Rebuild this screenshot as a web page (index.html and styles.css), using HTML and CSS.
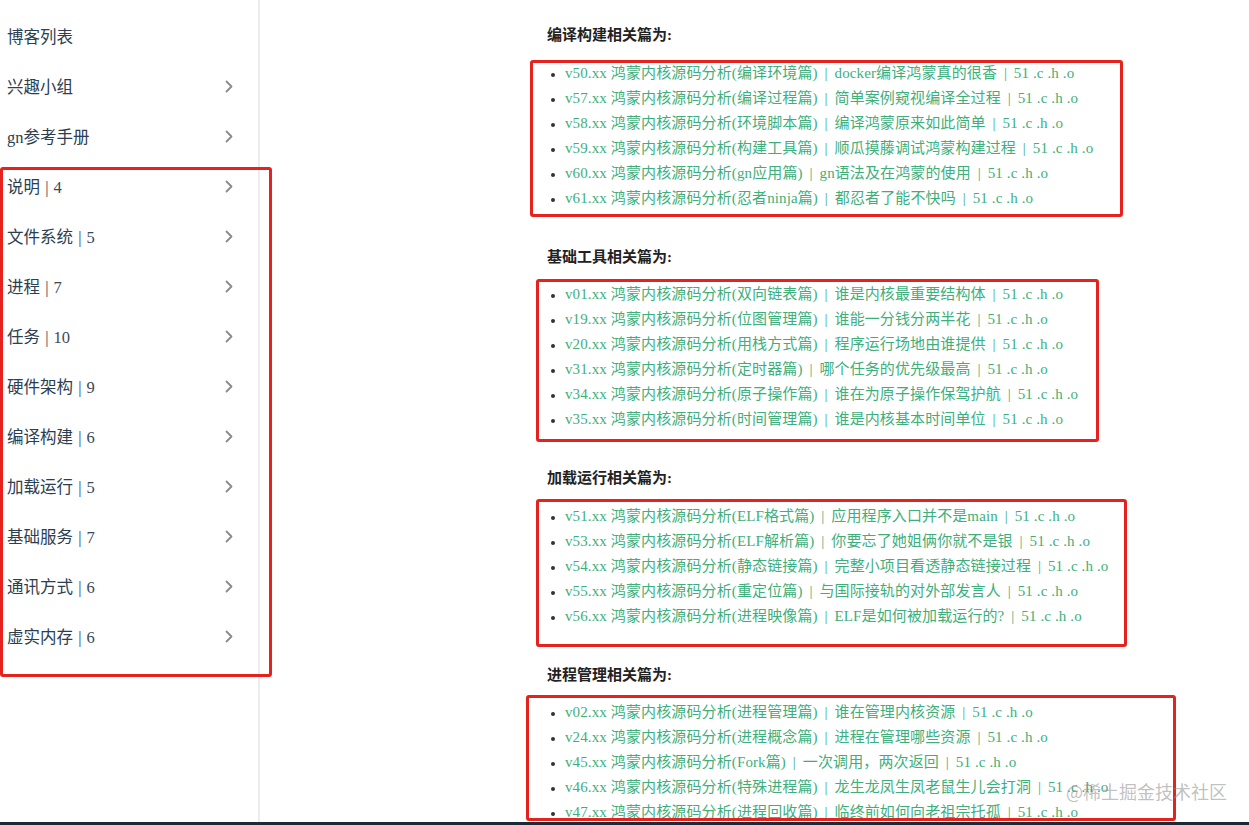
FILE: index.html
```html
<!DOCTYPE html>
<html lang="zh-CN">
<head>
<meta charset="utf-8">
<title>鸿蒙内核源码分析</title>
<link rel="stylesheet" href="styles.css">
</head>
<body>
<div class="page">
  <div class="main">
    <aside class="sidebar">
      <div class="nav-item"><span class="nav-text">博客列表</span></div>
      <div class="nav-item"><span class="nav-text">兴趣小组</span><svg class="chev" viewBox="0 0 8 13"><polyline points="1.5,1.5 6.5,6.5 1.5,11.5"/></svg></div>
      <div class="nav-item"><span class="nav-text">gn参考手册</span><svg class="chev" viewBox="0 0 8 13"><polyline points="1.5,1.5 6.5,6.5 1.5,11.5"/></svg></div>
      <div class="nav-item"><span class="nav-text">说明 <span class="num">| 4</span></span><svg class="chev" viewBox="0 0 8 13"><polyline points="1.5,1.5 6.5,6.5 1.5,11.5"/></svg></div>
      <div class="nav-item"><span class="nav-text">文件系统 <span class="num">| 5</span></span><svg class="chev" viewBox="0 0 8 13"><polyline points="1.5,1.5 6.5,6.5 1.5,11.5"/></svg></div>
      <div class="nav-item"><span class="nav-text">进程 <span class="num">| 7</span></span><svg class="chev" viewBox="0 0 8 13"><polyline points="1.5,1.5 6.5,6.5 1.5,11.5"/></svg></div>
      <div class="nav-item"><span class="nav-text">任务 <span class="num">| 10</span></span><svg class="chev" viewBox="0 0 8 13"><polyline points="1.5,1.5 6.5,6.5 1.5,11.5"/></svg></div>
      <div class="nav-item"><span class="nav-text">硬件架构 <span class="num">| 9</span></span><svg class="chev" viewBox="0 0 8 13"><polyline points="1.5,1.5 6.5,6.5 1.5,11.5"/></svg></div>
      <div class="nav-item"><span class="nav-text">编译构建 <span class="num">| 6</span></span><svg class="chev" viewBox="0 0 8 13"><polyline points="1.5,1.5 6.5,6.5 1.5,11.5"/></svg></div>
      <div class="nav-item"><span class="nav-text">加载运行 <span class="num">| 5</span></span><svg class="chev" viewBox="0 0 8 13"><polyline points="1.5,1.5 6.5,6.5 1.5,11.5"/></svg></div>
      <div class="nav-item"><span class="nav-text">基础服务 <span class="num">| 7</span></span><svg class="chev" viewBox="0 0 8 13"><polyline points="1.5,1.5 6.5,6.5 1.5,11.5"/></svg></div>
      <div class="nav-item"><span class="nav-text">通讯方式 <span class="num">| 6</span></span><svg class="chev" viewBox="0 0 8 13"><polyline points="1.5,1.5 6.5,6.5 1.5,11.5"/></svg></div>
      <div class="nav-item"><span class="nav-text">虚实内存 <span class="num">| 6</span></span><svg class="chev" viewBox="0 0 8 13"><polyline points="1.5,1.5 6.5,6.5 1.5,11.5"/></svg></div>
    </aside>

    <main class="content">
      <section class="sec">
        <h4 class="sec-title">编译构建相关篇为:</h4>
        <ul class="links">
          <li><a>v50.xx 鸿蒙内核源码分析(编译环境篇) <span class="sep">|</span> docker编译鸿蒙真的很香 <span class="sep">|</span> 51 .c .h .o</a></li>
          <li><a>v57.xx 鸿蒙内核源码分析(编译过程篇) <span class="sep">|</span> 简单案例窥视编译全过程 <span class="sep">|</span> 51 .c .h .o</a></li>
          <li><a>v58.xx 鸿蒙内核源码分析(环境脚本篇) <span class="sep">|</span> 编译鸿蒙原来如此简单 <span class="sep">|</span> 51 .c .h .o</a></li>
          <li><a>v59.xx 鸿蒙内核源码分析(构建工具篇) <span class="sep">|</span> 顺瓜摸藤调试鸿蒙构建过程 <span class="sep">|</span> 51 .c .h .o</a></li>
          <li><a>v60.xx 鸿蒙内核源码分析(gn应用篇) <span class="sep">|</span> gn语法及在鸿蒙的使用 <span class="sep">|</span> 51 .c .h .o</a></li>
          <li><a>v61.xx 鸿蒙内核源码分析(忍者ninja篇) <span class="sep">|</span> 都忍者了能不快吗 <span class="sep">|</span> 51 .c .h .o</a></li>
        </ul>
      </section>
      <section class="sec">
        <h4 class="sec-title">基础工具相关篇为:</h4>
        <ul class="links">
          <li><a>v01.xx 鸿蒙内核源码分析(双向链表篇) <span class="sep">|</span> 谁是内核最重要结构体 <span class="sep">|</span> 51 .c .h .o</a></li>
          <li><a>v19.xx 鸿蒙内核源码分析(位图管理篇) <span class="sep">|</span> 谁能一分钱分两半花 <span class="sep">|</span> 51 .c .h .o</a></li>
          <li><a>v20.xx 鸿蒙内核源码分析(用栈方式篇) <span class="sep">|</span> 程序运行场地由谁提供 <span class="sep">|</span> 51 .c .h .o</a></li>
          <li><a>v31.xx 鸿蒙内核源码分析(定时器篇) <span class="sep">|</span> 哪个任务的优先级最高 <span class="sep">|</span> 51 .c .h .o</a></li>
          <li><a>v34.xx 鸿蒙内核源码分析(原子操作篇) <span class="sep">|</span> 谁在为原子操作保驾护航 <span class="sep">|</span> 51 .c .h .o</a></li>
          <li><a>v35.xx 鸿蒙内核源码分析(时间管理篇) <span class="sep">|</span> 谁是内核基本时间单位 <span class="sep">|</span> 51 .c .h .o</a></li>
        </ul>
      </section>
      <section class="sec">
        <h4 class="sec-title">加载运行相关篇为:</h4>
        <ul class="links">
          <li><a>v51.xx 鸿蒙内核源码分析(ELF格式篇) <span class="sep">|</span> 应用程序入口并不是main <span class="sep">|</span> 51 .c .h .o</a></li>
          <li><a>v53.xx 鸿蒙内核源码分析(ELF解析篇) <span class="sep">|</span> 你要忘了她姐俩你就不是银 <span class="sep">|</span> 51 .c .h .o</a></li>
          <li><a>v54.xx 鸿蒙内核源码分析(静态链接篇) <span class="sep">|</span> 完整小项目看透静态链接过程 <span class="sep">|</span> 51 .c .h .o</a></li>
          <li><a>v55.xx 鸿蒙内核源码分析(重定位篇) <span class="sep">|</span> 与国际接轨的对外部发言人 <span class="sep">|</span> 51 .c .h .o</a></li>
          <li><a>v56.xx 鸿蒙内核源码分析(进程映像篇) <span class="sep">|</span> ELF是如何被加载运行的? <span class="sep">|</span> 51 .c .h .o</a></li>
        </ul>
      </section>
      <section class="sec">
        <h4 class="sec-title">进程管理相关篇为:</h4>
        <ul class="links">
          <li><a>v02.xx 鸿蒙内核源码分析(进程管理篇) <span class="sep">|</span> 谁在管理内核资源 <span class="sep">|</span> 51 .c .h .o</a></li>
          <li><a>v24.xx 鸿蒙内核源码分析(进程概念篇) <span class="sep">|</span> 进程在管理哪些资源 <span class="sep">|</span> 51 .c .h .o</a></li>
          <li><a>v45.xx 鸿蒙内核源码分析(Fork篇) <span class="sep">|</span> 一次调用，两次返回 <span class="sep">|</span> 51 .c .h .o</a></li>
          <li><a>v46.xx 鸿蒙内核源码分析(特殊进程篇) <span class="sep">|</span> 龙生龙凤生凤老鼠生儿会打洞 <span class="sep">|</span> 51 .c .h .o</a></li>
          <li><a>v47.xx 鸿蒙内核源码分析(进程回收篇) <span class="sep">|</span> 临终前如何向老祖宗托孤 <span class="sep">|</span> 51 .c .h .o</a></li>
        </ul>
      </section>
    </main>
  </div>
  <div class="bottombar"></div>

  <div class="redbox rb-side"></div>
  <div class="redbox rb-1"></div>
  <div class="redbox rb-2"></div>
  <div class="redbox rb-3"></div>
  <div class="redbox rb-4"></div>

  <div class="watermark">@稀土掘金技术社区</div>
</div>
</body>
</html>
```

FILE: styles.css
```css
* { box-sizing: border-box; }

html, body {
  margin: 0;
  padding: 0;
  background: #fff;
}

body {
  width: 1249px;
  height: 825px;
  overflow: hidden;
  font-family: "Liberation Serif", "Noto Sans CJK SC", serif;
  color: #2c3e50;
}

.page {
  position: relative;
  width: 1249px;
  height: 825px;
  display: flex;
  flex-direction: column;
}

.main {
  flex: 1;
  display: flex;
  min-height: 0;
}

/* Sidebar */
.sidebar {
  width: 260px;
  flex: none;
  border-right: 2px solid #ebedf0;
  padding-top: 11px;
  display: flex;
  flex-direction: column;
}

.nav-item {
  height: 50px;
  display: flex;
  align-items: center;
  justify-content: space-between;
  padding-left: 7px;
  padding-right: 25px;
  font-size: 16.5px;
  color: #2c3e50;
}

.nav-text {
  word-spacing: 1px;
}

.num {
  color: #3a4a58;
}

.chev {
  width: 8px;
  height: 13px;
  fill: none;
  stroke: #8a8a8a;
  stroke-width: 1.8;
  stroke-linecap: round;
  stroke-linejoin: round;
}

/* Content */
.content {
  flex: 1;
  padding-left: 287px;
  padding-top: 23px;
}

.sec {
  margin-bottom: 34px;
}

.sec-title {
  margin: 0 0 12.5px 0;
  font-size: 15px;
  line-height: 25px;
  font-weight: bold;
  color: #222;
}

.links {
  margin: 0;
  padding-left: 18px;
  list-style: disc;
  color: #2c3e50;
}

.links li {
  font-size: 15px;
  line-height: 25px;
  white-space: nowrap;
}

.links li::marker {
  font-size: 12px;
  color: #333;
}

.links a {
  color: #3eaf7c;
  text-decoration: none;
  letter-spacing: 0.12px;
}

.sep {
  margin: 0 3px;
}

.bottombar {
  height: 3px;
  flex: none;
  background: #1c2a37;
}

/* Red annotation boxes drawn over the screenshot */
.redbox {
  position: absolute;
  border: 3px solid #e5221d;
  border-radius: 3px;
  pointer-events: none;
}

.rb-side { left: 0; top: 167px; width: 272px; height: 510px; }
.rb-1 { left: 530px; top: 60px; width: 593px; height: 157px; }
.rb-2 { left: 536px; top: 279px; width: 563px; height: 163px; }
.rb-3 { left: 536px; top: 499px; width: 591px; height: 148px; }
.rb-4 { left: 526px; top: 695px; width: 650px; height: 126px; }

.watermark {
  position: absolute;
  left: 1066px;
  top: 779px;
  font-family: "Noto Sans CJK SC", sans-serif;
  font-size: 18px;
  line-height: 24px;
  color: rgba(140, 140, 140, 0.55);
  white-space: nowrap;
  pointer-events: none;
}
```
